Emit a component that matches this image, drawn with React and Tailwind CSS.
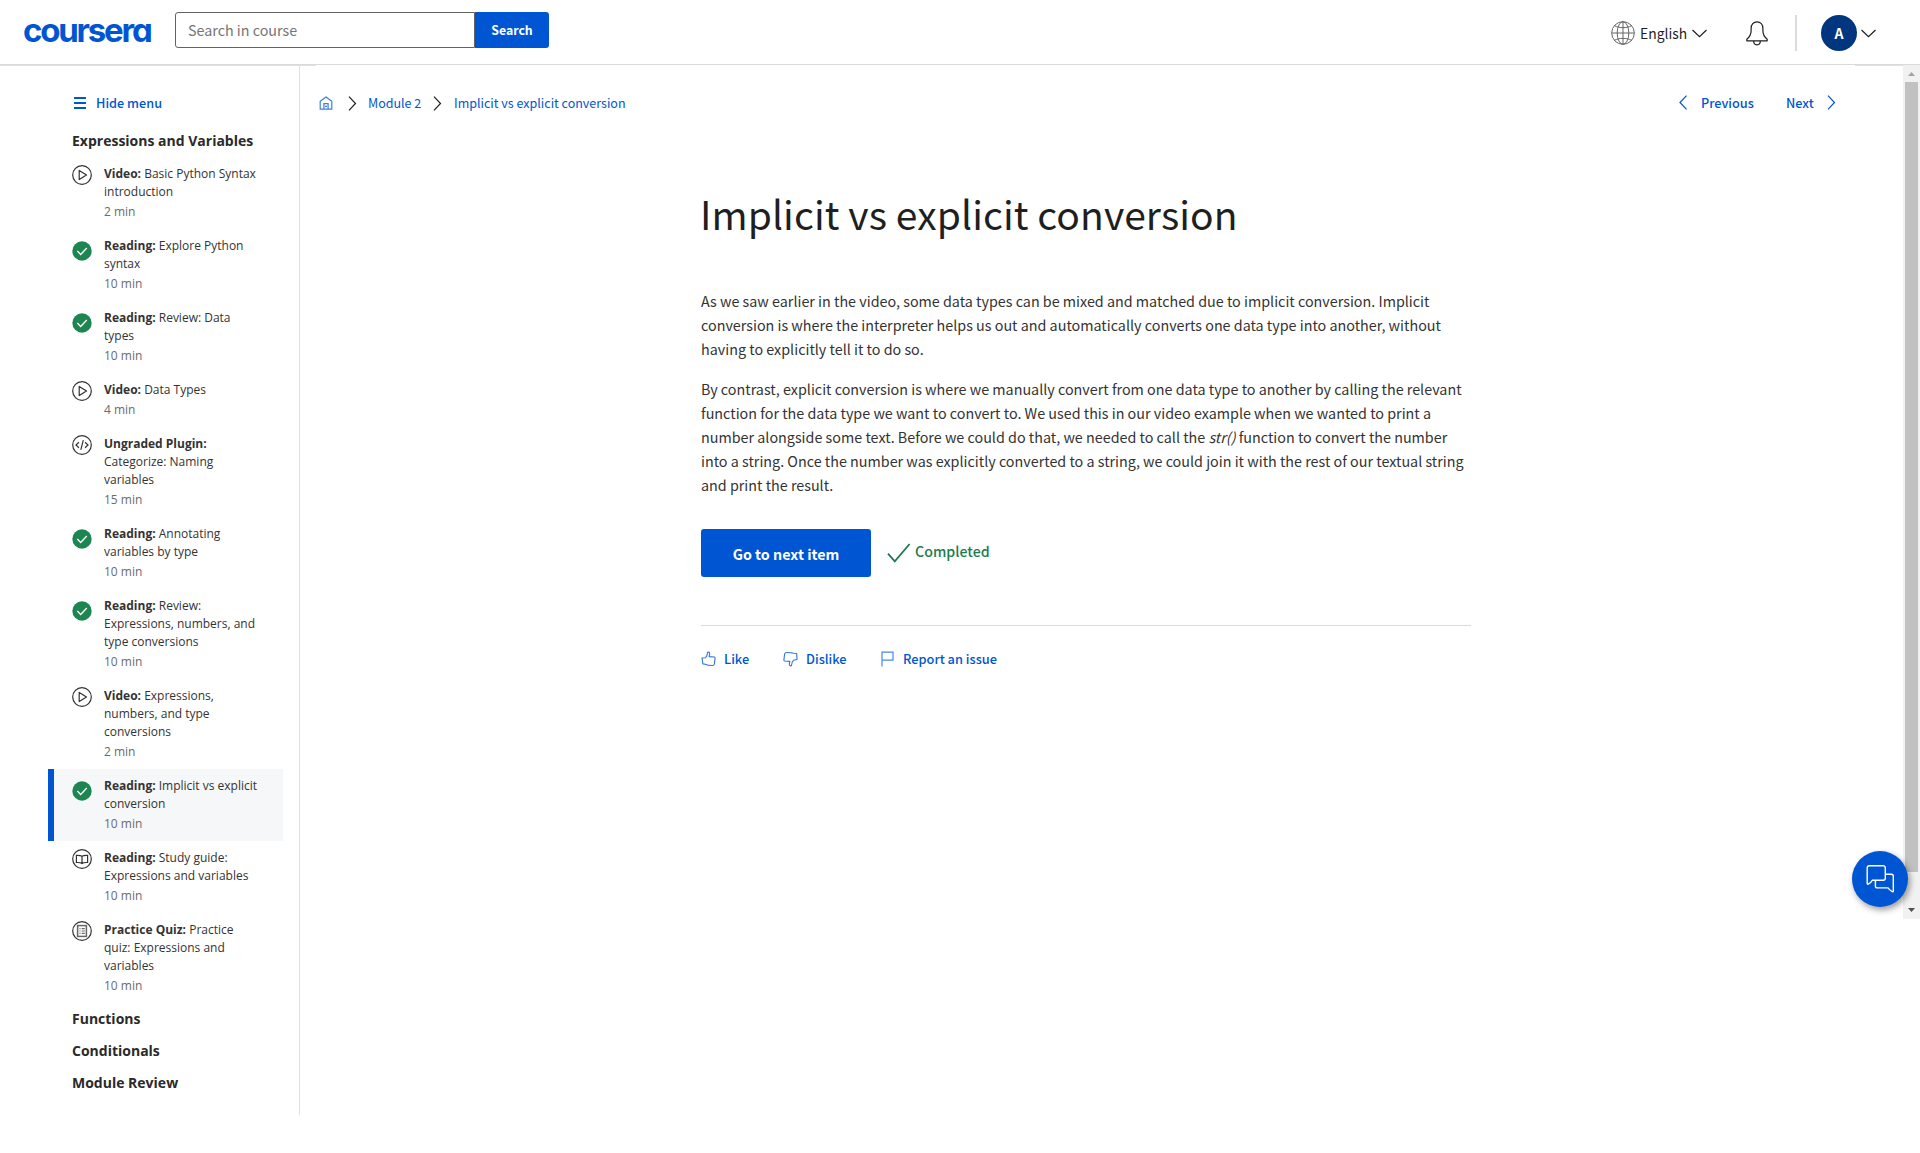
const CHECK = "check";
const PLAY = "play";

const items = [
  { icon: PLAY, type: "Video:", lines: ["Basic Python Syntax", "introduction"], time: "2 min" },
  { icon: CHECK, type: "Reading:", lines: ["Explore Python", "syntax"], time: "10 min" },
  { icon: CHECK, type: "Reading:", lines: ["Review: Data", "types"], time: "10 min" },
  { icon: PLAY, type: "Video:", lines: ["Data Types"], time: "4 min" },
  { icon: "code", type: "Ungraded Plugin:", lines: ["", "Categorize: Naming", "variables"], time: "15 min" },
  { icon: CHECK, type: "Reading:", lines: ["Annotating", "variables by type"], time: "10 min" },
  { icon: CHECK, type: "Reading:", lines: ["Review:", "Expressions, numbers, and", "type conversions"], time: "10 min" },
  { icon: PLAY, type: "Video:", lines: ["Expressions,", "numbers, and type", "conversions"], time: "2 min" },
  { icon: CHECK, type: "Reading:", lines: ["Implicit vs explicit", "conversion"], time: "10 min", active: true },
  { icon: "book", type: "Reading:", lines: ["Study guide:", "Expressions and variables"], time: "10 min" },
  { icon: "quiz", type: "Practice Quiz:", lines: ["Practice", "quiz: Expressions and", "variables"], time: "10 min" },
];

function ItemIcon({ name }) {
  if (name === CHECK) {
    return (
      <svg className="mt-1 size-5" viewBox="0 0 20 20" fill="none">
        <circle cx="10" cy="10" r="9.7" fill="#1d8650" />
        <path d="M5.3 10.1l3.4 3.3 6.1-6.5" stroke="#fff" strokeWidth="1.4" />
      </svg>
    );
  }
  return (
    <svg className="size-5" viewBox="0 0 20 20" fill="none" stroke="#333" strokeWidth="1.2">
      <circle cx="10" cy="10" r="9.3" />
      {name === PLAY && <path d="M7.2 5.4v9.2l7.3-4.6z" strokeLinejoin="round" />}
      {name === "code" && <path d="M6.9 7.2L4 10l2.9 2.8M13.1 7.2L16 10l-2.9 2.8M11.3 5.2l-2.5 9.6" />}
      {name === "book" && (
        <path d="M10 7.2C8.8 6.4 7 6.3 4.4 6.4v7.1c2.6-.1 4.4 0 5.6.9 1.200-.9 3-1 5.600-.9V6.400C13 6.300 11.200 6.400 10 7.200zM10 7.200v7.200" />
      )}
      {name === "quiz" && (
        <g stroke="#666">
          <rect x="5.6" y="4.6" width="8.8" height="10.8" strokeWidth="1.5" />
          <path d="M7.500 7.600h1M7.500 10h1M7.500 12.400h1M9.700 7.600h3M9.700 10h3M9.700 12.400h3" />
        </g>
      )}
    </svg>
  );
}

function Chevron({ dir, className }) {
  const d = {
    right: "M1 .7l6.500 6.800L1 14.300",
    left: "M7.500.7L1 7.500l6.500 6.800",
  }[dir];
  return (
    <svg className={className} width="9" height="15" viewBox="0 0 9 15" fill="none" stroke="currentColor" strokeWidth="1.2">
      <path d={d} />
    </svg>
  );
}

function ChevronDown({ className }) {
  return (
    <svg className={className} width="15" height="9" viewBox="0 0 15 9" fill="none" stroke="#1f1f1f" strokeWidth="1.2">
      <path d="M.5 1l7 6.700L14.500 1" />
    </svg>
  );
}

function Header() {
  return (
    <header className="flex h-[65px] shrink-0 items-start border-b border-[#dadada]">
      <div className="ml-[23px] mt-[10px] w-[152px] font-['Inter',sans-serif] text-[33px] font-bold leading-10 tracking-[-2.2px] text-[#0056d2] [font-feature-settings:'cv11']">
        coursera
      </div>
      <div className="mt-3 flex h-9">
        <div className="w-[300px] rounded-l-[3px] border border-[#636363] pl-3 text-[14.3px] leading-[33px] text-[#757575]">
          Search in course
        </div>
        <div className="w-[74px] rounded-r-[3px] bg-[#0056d2] text-center text-[12.3px] font-bold leading-9 text-white">
          Search
        </div>
      </div>
      <div className="ml-auto mr-11 mt-[15px] flex h-9 items-center">
        <svg width="24" height="24" viewBox="0 0 24 24" fill="none" stroke="#666" strokeWidth="1">
          <circle cx="12" cy="12" r="11.3" />
          <ellipse cx="12" cy="12" rx="5.8" ry="11.3" />
          <path d="M12 .7v22.600M.7 12h22.600M3.500 4.700c4.500 2.600 12.500 2.600 17 0M3.500 19.300c4.500-2.600 12.500-2.600 17 0" />
        </svg>
        <span className="ml-[5px] w-[47px] whitespace-nowrap text-[13.9px] leading-6 text-[#1f1f1f]">English</span>
        <ChevronDown className="ml-[5px]" />
        <svg className="ml-[39px]" width="22" height="25" viewBox="0 0 22 25" fill="none" stroke="#1f1f1f" strokeWidth="1.2">
          <path d="M.8 19.800v-1.500c2.800-2.300 4.300-4.500 4.300-8.300V7.500C5.100 3.500 7.500.8 11 .8s5.900 2.700 5.900 6.700V10c0 3.800 1.500 6 4.300 8.300v1.500z" strokeLinejoin="round" />
          <path d="M7.700 20c0 2.300 1.300 3.800 3.300 3.800s3.300-1.500 3.300-3.800" />
        </svg>
        <div className="ml-[27px] h-9 w-[2px] bg-[#dadada]" />
        <div className="ml-6 size-9 rounded-full bg-[#00357f] text-center text-[14px] font-bold leading-9 text-white">A</div>
        <ChevronDown className="ml-1" />
      </div>
    </header>
  );
}

function SideHeading({ children }) {
  return <div className="h-8 pl-[24px] text-[14px] font-bold leading-8 text-[#2a2a2a]">{children}</div>;
}

function Sidebar() {
  return (
    <aside className="h-[1050px] w-[300px] shrink-0 border-r border-[#e1e1e1] pl-12 pr-4 font-['Open_Sans',sans-serif]">
      <div className="flex items-center pb-3 pl-[26px] pt-7">
        <div className="flex w-3 flex-col gap-[3px]">
          <div className="h-[2px] bg-[#0056d2]" />
          <div className="h-[2px] bg-[#0056d2]" />
          <div className="h-[2px] bg-[#0056d2]" />
        </div>
        <div className="ml-[10px] font-['Noto_Sans_CJK_SC',sans-serif] text-[12.7px] font-medium leading-5 text-[#0056d2]">
          Hide menu
        </div>
      </div>
      <SideHeading>Expressions and Variables</SideHeading>
      {items.map((it, i) => (
        <div
          key={i}
          className={
            it.active
              ? "flex border-l-[6px] border-[#0056d2] bg-[#f5f7f8] py-2 pl-[18px]"
              : "flex border-l-[6px] border-transparent py-2 pl-[18px]"
          }
        >
          <ItemIcon name={it.icon} />
          <div className="ml-3 whitespace-nowrap text-[12px] leading-[18px] text-[#333]">
            <div>
              <b className="font-bold">{it.type}</b> {it.lines[0]}
            </div>
            {it.lines.slice(1).map((l) => (
              <div key={l}>{l}</div>
            ))}
            <div className="mt-[2px] text-[#6b6b6b]">{it.time}</div>
          </div>
        </div>
      ))}
      <SideHeading>Functions</SideHeading>
      <SideHeading>Conditionals</SideHeading>
      <SideHeading>Module Review</SideHeading>
    </aside>
  );
}

function TopNav() {
  return (
    <div className="flex justify-between whitespace-nowrap pl-[19px] pr-[67px] pt-7 text-[12.5px] leading-5 text-[#0056d2]">
      <nav className="flex items-center">
        <svg width="14" height="14" viewBox="0 0 14 14" fill="none" stroke="#3f7fdf" strokeWidth="1.2">
          <path d="M1.200 5.300L7 .9l5.800 4.400v7.900H1.200z" strokeLinejoin="round" />
          <path d="M4.900 13V7.700h4.200V13M6 10.300h2" />
        </svg>
        <Chevron dir="right" className="ml-[15px] text-[#1f1f1f]" />
        <span className="ml-[11px] w-[53px]">Module 2</span>
        <Chevron dir="right" className="ml-[12px] text-[#1f1f1f]" />
        <span className="ml-[12px]">Implicit vs explicit conversion</span>
      </nav>
      <div className="-mt-px flex items-center text-[12.7px] font-medium">
        <Chevron dir="left" />
        <span className="ml-[13px] w-[53px]">Previous</span>
        <span className="ml-8 w-[28px]">Next</span>
        <Chevron dir="right" className="ml-[13px]" />
      </div>
    </div>
  );
}

function Article() {
  return (
    <article className="ml-[400px] mt-[72px] w-[771px] whitespace-nowrap pl-px">
      <h1 className="-ml-px text-[39px] leading-[56px] tracking-[0.08px] text-[#1f1f1f]">Implicit vs explicit conversion</h1>
      <div className="mt-12 flex flex-col gap-4 text-[14.33px] leading-6 text-[#333]">
        <p>
          As we saw earlier in the video, some data types can be mixed and matched due to implicit conversion. Implicit
          <br />
          conversion is where the interpreter helps us out and automatically converts one data type into another, without
          <br />
          having to explicitly tell it to do so.
        </p>
        <p>
          By contrast, explicit conversion is where we manually convert from one data type to another by calling the relevant
          <br />
          function for the data type we want to convert to. We used this in our video example when we wanted to print a
          <br />
          number alongside some text. Before we could do that, we needed to call the <i>str()</i> function to convert the number
          <br />
          into a string. Once the number was explicitly converted to a string, we could join it with the rest of our textual string
          <br />
          and print the result.
        </p>
      </div>
      <div className="mt-8 flex items-center border-b border-[#dadada] pb-12">
        <div className="h-12 w-[170px] rounded-[3px] bg-[#0056d2] text-center text-[14.3px] font-bold leading-[49px] text-white">
          Go to next item
        </div>
        <svg className="ml-4" width="24" height="20" viewBox="0 0 24 20" fill="none" stroke="#1d7c4d" strokeWidth="1.8">
          <path d="M1 10.600l6.800 7.700L22.600 1" />
        </svg>
        <span className="-mt-1 ml-[4px] text-[14.2px] font-medium leading-6 text-[#1d7c4d]">Completed</span>
      </div>
      <div className="mt-[23px] flex items-center text-[12.8px] font-medium leading-5 text-[#0056d2]">
        <svg width="15" height="16" viewBox="0 0 15 16" fill="none" stroke="#2f74dc" strokeWidth="1.1" strokeLinejoin="round">
          <path d="M4.600 6.700C6.200 5.200 6.400 3.800 6.600 1.300c1.500-.5 2.300.7 2 2.300l-.5 2 5.200.4c.9.300.9 1.200.7 1.900l-.6 5.100c-.3 1.300-1 1.500-2 1.500-3.200 0-5.400-.4-7.200-1.300l-2.300-.3L1 7z" />
        </svg>
        <span className="ml-2 w-[26px]">Like</span>
        <svg className="ml-[33px]" width="15" height="16" viewBox="0 0 15 16" fill="none" stroke="#2f74dc" strokeWidth="1.1" strokeLinejoin="round">
          <path d="M10.400 9.300c-1.600 1.500-1.800 2.900-2 5.400-1.500.5-2.300-.7-2-2.300l.5-2-5.200-.4C.8 9.700.8 8.800 1 8.100L1.600 3C1.900 1.700 2.600 1.500 3.600 1.500c3.200 0 5.400.1 7.200.7l2.900.3.300 6z" />
        </svg>
        <span className="ml-2 w-[41px]">Dislike</span>
        <svg className="ml-[34px]" width="13" height="16" viewBox="0 0 13 16" fill="none" stroke="#4c87e1" strokeWidth="1.2">
          <path d="M1 15.500V1.200h11v8H1" />
        </svg>
        <span className="ml-[9px]">Report an issue</span>
      </div>
    </article>
  );
}

function Scrollbar() {
  return (
    <div className="flex h-[854px] w-[17px] shrink-0 flex-col items-center bg-[#f1f1f1]">
      <svg className="h-[17px]" width="17" viewBox="0 0 17 17">
        <path d="M5 11h7L8.500 7z" fill="#a3a3a3" />
      </svg>
      <div className="h-[790px] w-[13px] bg-[#c1c1c1]" />
      <svg className="mt-auto h-[17px]" width="17" viewBox="0 0 17 17">
        <path d="M5 6h7l-3.500 4z" fill="#505050" />
      </svg>
    </div>
  );
}

export default function App() {
  return (
    <div className="relative flex h-[1153px] w-[1920px] flex-col overflow-hidden bg-white font-['Noto_Sans_CJK_SC',sans-serif]">
      <Header />
      <div className="-mb-px flex h-px shrink-0 justify-between">
        <div className="w-[316px] bg-[#e0e0e0]" />
        <div className="w-[65px] bg-[#e0e0e0]" />
      </div>
      <div className="flex">
        <Sidebar />
        <main className="flex-1">
          <TopNav />
          <Article />
        </main>
        <Scrollbar />
      </div>
      <div className="absolute left-[1852px] top-[851px] flex size-14 items-center justify-center rounded-full bg-[#0056d2] shadow-[2px_3px_6px_rgba(0,0,0,0.4)]">
        <svg width="28" height="28" viewBox="0 0 28 28" fill="none" stroke="#fff" strokeWidth="1.4" strokeLinejoin="round">
          <path d="M3 .8h14.300a2 2 0 0 1 2 2v10.500a2 2 0 0 1-2 2H6.200c-.8 1.500-1.800 3-4 3.900-.7.100-1-.3-1-1V2.800a2 2 0 0 1 1.800-2z" />
          <path d="M19.300 9.200h6a2 2 0 0 1 2 2V26c0 .8-.7 1-1.300.5-1.700-1-3-2.300-4-3.600H11.400a2 2 0 0 1-2-2v-5.600" />
        </svg>
      </div>
    </div>
  );
}
